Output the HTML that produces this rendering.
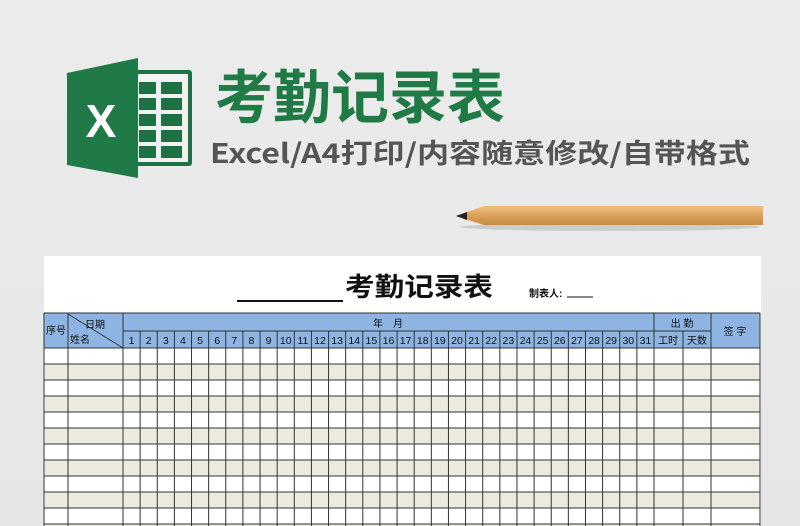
<!DOCTYPE html>
<html><head><meta charset="utf-8"><style>
html,body{margin:0;padding:0}
body{width:800px;height:526px;overflow:hidden;background:#ebebeb;position:relative;font-family:"Liberation Sans","Noto Sans CJK SC",sans-serif}
</style></head><body>
<svg id="s" width="800" height="526" viewBox="0 0 800 526" xmlns="http://www.w3.org/2000/svg" style="position:absolute;left:0;top:0">
<defs>
<linearGradient id="bg" x1="0" y1="0" x2="0" y2="1"><stop offset="0" stop-color="#ececec"/><stop offset="1" stop-color="#e6e6e6"/></linearGradient>
<linearGradient id="pen" x1="0" y1="0" x2="0" y2="1"><stop offset="0" stop-color="#f0c07c"/><stop offset="0.5" stop-color="#dba05a"/><stop offset="1" stop-color="#c48a44"/></linearGradient>
</defs>
<rect width="800" height="526" fill="url(#bg)"/>
<rect x="120" y="70" width="72" height="96" rx="3" fill="#1e7145"/>
<rect x="124" y="74" width="64" height="88" fill="#f2f2f2"/>
<g fill="#1e7145">
<rect x="139" y="82" width="17" height="12"/><rect x="161" y="82" width="21" height="12"/>
<rect x="139" y="98" width="17" height="12"/><rect x="161" y="98" width="21" height="12"/>
<rect x="139" y="114" width="17" height="12"/><rect x="161" y="114" width="21" height="12"/>
<rect x="139" y="130" width="17" height="12"/><rect x="161" y="130" width="21" height="12"/>
<rect x="139" y="146" width="17" height="12"/><rect x="161" y="146" width="21" height="12"/>
</g>
<polygon points="67,73 138,58 138,178 67,165" fill="#1f7a47"/>
<text x="101" y="137" font-size="46" font-weight="bold" fill="#fff" text-anchor="middle" font-family="Liberation Sans">X</text>
<text x="215" y="118" font-size="58" font-weight="bold" fill="#1f7a45" textLength="290" lengthAdjust="spacingAndGlyphs" font-family="Noto Sans CJK SC">考勤记录表</text>
<text x="210" y="163" font-size="27" font-weight="bold" fill="#555" textLength="540" lengthAdjust="spacingAndGlyphs" font-family="Noto Sans CJK SC,sans-serif">Excel/A4打印/内容随意修改/自带格式</text>
<ellipse cx="610" cy="227" rx="150" ry="4" fill="#000" opacity="0.12"/>
<polygon points="484,206 763,206 763,225 484,225 456,216" fill="url(#pen)"/>
<polygon points="467,212 456,216 467,220" fill="#222"/>
<rect x="44" y="256" width="717" height="270" fill="#fff"/>
<text x="345" y="296" font-size="26" font-weight="bold" fill="#111" textLength="148" lengthAdjust="spacingAndGlyphs">考勤记录表</text>
<line x1="237" y1="301" x2="343" y2="301" stroke="#111" stroke-width="2"/>
<text x="529" y="297" font-size="10" font-weight="bold" fill="#111">制表人:</text>
<line x1="567" y1="297" x2="593" y2="297" stroke="#111" stroke-width="1"/>
<rect x="44" y="313" width="716" height="35" fill="#8db4e2"/>
<g id="g"></g>
</svg>
<script>
(function(){
var g=document.getElementById('g'),h='';
var T=313,M=331,H=348;
for(var i=0;i<12;i++){var y=H+i*16;if(i%2==1)h+='<rect x="45" y="'+y+'" width="715" height="16" fill="#eceadf"/>';}
for(var i=0;i<=12;i++){var y=H+i*16;h+='<line x1="44" y1="'+y+'" x2="760" y2="'+y+'" stroke="#333" stroke-width="1"/>';}
h+='<line x1="44" y1="313" x2="760" y2="313" stroke="#333"/>';
var cols=[44,68,123];var w=(654-123)/31;
for(var d=1;d<=31;d++)cols.push(123+d*w);
cols.push(683,711,760);
for(var j=0;j<cols.length;j++){var x=cols[j];var yt=T;if((j>=3&&j<=32)||j==34)yt=M;h+='<line x1="'+x+'" y1="'+yt+'" x2="'+x+'" y2="526" stroke="#333"/>';}
h+='<line x1="123" y1="331" x2="711" y2="331" stroke="#333"/>';
h+='<line x1="68" y1="314" x2="123" y2="348" stroke="#333"/>';
for(var d=1;d<=31;d++){var cx=123+(d-0.5)*w;h+='<text x="'+cx+'" y="344" font-size="10.5" text-anchor="middle" fill="#111">'+d+'</text>';}
h+='<text x="56" y="334" font-size="10" text-anchor="middle" fill="#111">序号</text>';
h+='<text x="95" y="328" font-size="10" text-anchor="middle" fill="#111">日期</text>';
h+='<text x="70" y="343" font-size="10" fill="#111">姓名</text>';
h+='<text x="388" y="327" font-size="10" text-anchor="middle" fill="#111">年　月</text>';
h+='<text x="682" y="327" font-size="10" text-anchor="middle" fill="#111">出 勤</text>';
h+='<text x="668" y="344" font-size="10" text-anchor="middle" fill="#111">工时</text>';
h+='<text x="697" y="344" font-size="10" text-anchor="middle" fill="#111">天数</text>';
h+='<text x="735" y="335" font-size="10" text-anchor="middle" fill="#111">签 字</text>';
g.innerHTML=h;
})();
</script>
</body></html>
